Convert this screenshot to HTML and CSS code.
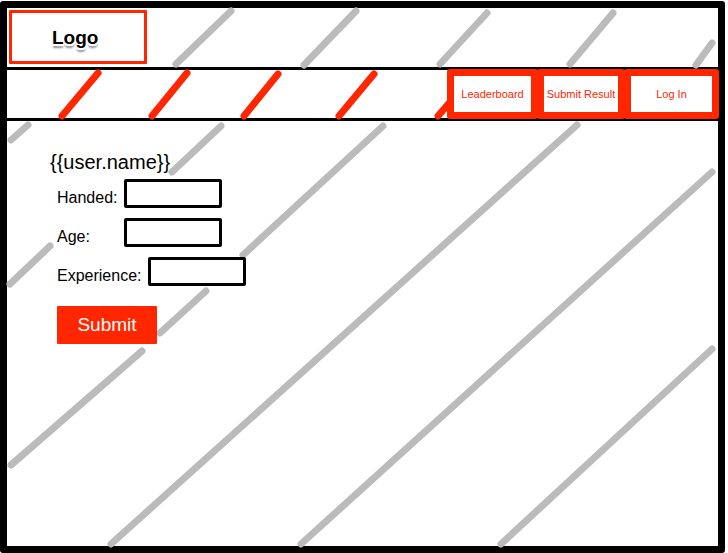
FILE: index.html
```html
<!DOCTYPE html>
<html lang="en">
<head>
<meta charset="utf-8">
<title>User profile</title>
<link rel="stylesheet" href="styles.css">
</head>
<body>
<div class="frame">
  <header class="header">
    <svg class="stripes" viewBox="0 0 711 59" preserveAspectRatio="none" aria-hidden="true">
      <path d="M169 56L224 3M297 57L349 3M433 56L480 5M563 56L606 5M689 57L705 35"/>
    </svg>
    <a class="logo" href="#">Logo</a>
  </header>
  <nav class="nav">
    <svg class="stripes stripes-red" viewBox="0 0 711 48" preserveAspectRatio="none" aria-hidden="true">
      <path d="M55 46L91 3M145 46L180 3M237 46L271 4M332 46L367 4M431 46L450 24"/>
    </svg>
    <a class="nav-link" href="#">Leaderboard</a>
    <a class="nav-link nav-link-narrow" href="#">Submit Result</a>
    <a class="nav-link nav-link-wide" href="#">Log In</a>
  </nav>
  <main class="main">
    <svg class="stripes" viewBox="0 0 711 425" preserveAspectRatio="none" aria-hidden="true">
      <path d="M4 19L21 4M165 51L214 5M3 163L43 125M236 134L376 5M153 212L199 170M4 344L135 230M104 423L570 4M294 423L705 51M494 423L705 228"/>
    </svg>
    <h1 class="user">{{user.name}}</h1>
    <form class="form">
      <div class="field">
        <label for="handed">Handed:</label>
        <input id="handed" type="text">
      </div>
      <div class="field">
        <label for="age">Age:</label>
        <input id="age" type="text">
      </div>
      <div class="field">
        <label for="experience">Experience:</label>
        <input id="experience" type="text">
      </div>
      <button class="submit" type="submit">Submit</button>
    </form>
  </main>
</div>
</body>
</html>
```
FILE: styles.css
```css
* {
  box-sizing: border-box;
}

body {
  margin: 0;
  padding: 1px 3px 0 0;
  min-height: 100vh;
  display: flex;
  background: #fff;
  color: #000;
  font-family: "Liberation Sans", Arial, sans-serif;
}

.frame {
  flex: 1;
  display: flex;
  flex-direction: column;
  border: 7px solid #000;
  border-radius: 3px;
}

.header,
.nav,
.main {
  position: relative;
}

.stripes {
  position: absolute;
  inset: 0;
  width: 100%;
  height: 100%;
  overflow: visible;
  fill: none;
  stroke: #bbb;
  stroke-width: 7px;
  stroke-linecap: round;
}

.stripes-red {
  stroke: #ff2600;
}

.header {
  display: flex;
  padding: 2px 2px 3px;
  border-bottom: 3px solid #000;
}

.logo {
  position: relative;
  width: 138px;
  height: 54px;
  padding-left: 40px;
  border: 3px solid #ff2600;
  border-radius: 1px;
  background: #fff;
  color: #000;
  font-size: 19px;
  font-weight: bold;
  line-height: 50px;
  text-decoration: none;
  text-shadow: 2px 0 0 #fff, -2px 0 0 #fff, 1px 2px 0 #fff, -1px 2px 0 #fff, 0 4px 2px #888;
}

.nav {
  display: flex;
  justify-content: flex-end;
  height: 51px;
  border-bottom: 3px solid #000;
}

.nav-link {
  position: relative;
  display: flex;
  align-items: center;
  justify-content: center;
  width: 91px;
  margin: -1px -1px -1px 0;
  border: 7px solid #ff2600;
  border-radius: 3px;
  background: #fff;
  color: #ff2600;
  font-size: 11px;
  white-space: nowrap;
  text-decoration: none;
}

.nav-link-narrow {
  width: 88px;
}

.nav-link-wide {
  width: 95px;
}

.main {
  flex: 1;
  padding: 29px 43px;
}

.user {
  position: relative;
  margin: 0;
  font-size: 20px;
  font-weight: normal;
  line-height: 24px;
}

.form {
  position: relative;
  display: flex;
  flex-direction: column;
  align-items: flex-start;
  gap: 10px;
  margin: 5px 0 0 7px;
}

.field {
  display: flex;
  align-items: flex-end;
  gap: 6px;
}

.field label {
  min-width: 61px;
  font-size: 16px;
  line-height: 20px;
}

.field input {
  width: 98px;
  height: 29px;
  padding: 0 4px;
  border: 3px solid #000;
  border-radius: 2px;
  background: #fff;
  font: inherit;
}

.submit {
  width: 100px;
  height: 38px;
  margin-top: 10px;
  padding: 0;
  border: 0;
  border-radius: 1px;
  background: #ff2600;
  color: #fff;
  font-family: inherit;
  font-size: 19px;
}
```
